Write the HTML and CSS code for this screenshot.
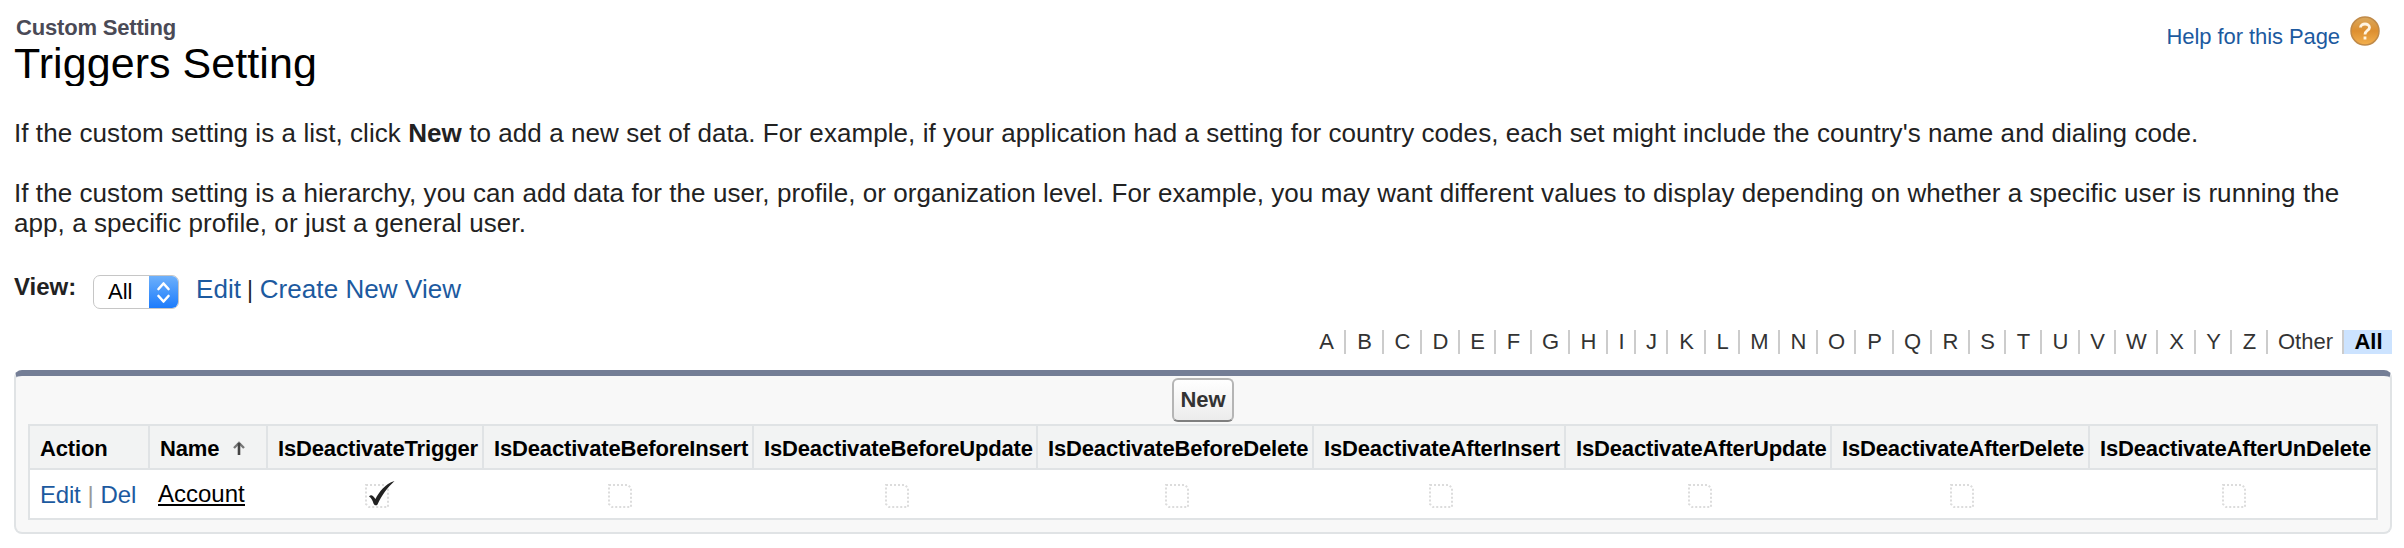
FILE: index.html
```html
<!DOCTYPE html>
<html lang="en">
<head>
<meta charset="utf-8">
<title>Triggers Setting</title>
<link rel="stylesheet" href="styles.css">
</head>
<body>
<header class="page-header">
  <div class="heading">
    <div class="kicker">Custom Setting</div>
    <h1 class="title">Triggers Setting</h1>
  </div>
  <a class="help">
    <span class="help-text">Help for this Page</span>
    <svg class="help-icon" viewBox="0 0 30 30">
      <defs><linearGradient id="orb" x1="0" y1="0" x2="0" y2="1"><stop offset="0" stop-color="#d9a75c"/><stop offset=".5" stop-color="#dd8f30"/><stop offset="1" stop-color="#f3b04e"/></linearGradient></defs>
      <circle cx="15" cy="15" r="14" fill="url(#orb)" stroke="#c08a48" stroke-width="1.500"/>
      <path d="M10.500 11.500C10.500 6.800 19.500 6.800 19.500 11.500C19.500 14.500 15 14.500 15 18.500M15 20.500V23.500" fill="none" stroke="#fff4e2" stroke-width="2.800"/>
    </svg>
  </a>
</header>
<main>
  <p class="intro">If the custom setting is a list, click <b>New</b> to add a new set of data. For example, if your application had a setting for country codes, each set might include the country's name and dialing code.</p>
  <p class="intro">If the custom setting is a hierarchy, you can add data for the user, profile, or organization level. For example, you may want different values to display depending on whether a specific user is running the<br>app, a specific profile, or just a general user.</p>
  <div class="view-bar">
    <span class="view-label">View:</span>
    <span class="select"><span class="select-value">All</span>
      <svg class="select-arrows" viewBox="0 0 29 34"><path d="M9.500 14L14.500 8.500L19.500 14M9.500 21L14.500 26.500L19.500 21" fill="none" stroke="#fff" stroke-width="2.600" stroke-linecap="round" stroke-linejoin="round"/></svg>
    </span>
    <span class="view-links"><a>Edit</a> <i>|</i> <a>Create New View</a></span>
  </div>
  <nav class="rolodex">
    <a>A</a><a>B</a><a>C</a><a>D</a><a class="w36">E</a><a class="w36">F</a><a>G</a><a>H</a><a class="w28">I</a><a class="w32">J</a><a>K</a><a class="w34">L</a><a class="w40">M</a><a>N</a><a>O</a><a>P</a><a>Q</a><a>R</a><a class="w36">S</a><a class="w36">T</a><a>U</a><a class="w36">V</a><a class="w42">W</a><a>X</a><a class="w36">Y</a><a class="w36">Z</a><a class="other">Other</a><a class="current">All</a>
  </nav>
  <section class="panel">
    <div class="buttons"><button class="new">New</button></div>
    <div class="grid">
      <div class="th">Action</div>
      <div class="th">Name<svg class="sort" viewBox="0 0 14 16"><path d="M2 8L7 3L12 8" fill="none" stroke="#777" stroke-width="2.400"/><path d="M7 15V3" stroke="#444" stroke-width="2.600"/></svg></div>
      <div class="th">IsDeactivateTrigger</div>
      <div class="th">IsDeactivateBeforeInsert</div>
      <div class="th">IsDeactivateBeforeUpdate</div>
      <div class="th">IsDeactivateBeforeDelete</div>
      <div class="th">IsDeactivateAfterInsert</div>
      <div class="th">IsDeactivateAfterUpdate</div>
      <div class="th">IsDeactivateAfterDelete</div>
      <div class="th">IsDeactivateAfterUnDelete</div>
      <div class="td actions"><a>Edit</a><i>|</i><a>Del</a></div>
      <div class="td name"><a class="account">Account</a></div>
      <div class="td check"><svg class="box" viewBox="0 0 24 24"><use href="#empty"/><path d="M4 12.500C6 10 8 11.500 10.500 15C14 8 20 0 29.500 -3C22 4 17 11 12.500 20.500C11.500 22 9.500 21.500 8.500 19.500C7.500 16.500 6.500 14 4 12.500Z" fill="#222"/></svg></div>
      <div class="td check"><svg class="box" viewBox="0 0 24 24"><path id="empty" d="M1 1H20L23 4V23H4L1 20Z" fill="none" stroke="#dcdcdc" stroke-width="2" stroke-dasharray="2 2"/></svg></div>
      <div class="td check"><svg class="box" viewBox="0 0 24 24"><use href="#empty"/></svg></div>
      <div class="td check"><svg class="box" viewBox="0 0 24 24"><use href="#empty"/></svg></div>
      <div class="td check"><svg class="box" viewBox="0 0 24 24"><use href="#empty"/></svg></div>
      <div class="td check"><svg class="box" viewBox="0 0 24 24"><use href="#empty"/></svg></div>
      <div class="td check"><svg class="box" viewBox="0 0 24 24"><use href="#empty"/></svg></div>
      <div class="td check"><svg class="box" viewBox="0 0 24 24"><use href="#empty"/></svg></div>
    </div>
  </section>
</main>
</body>
</html>
```
FILE: styles.css
```css
* { box-sizing: border-box; }
body { margin: 0; padding: 0 12px 0 14px; background: #fff; color: #222; font-family: "Liberation Sans", Arial, sans-serif; }
a { color: #1c5a9f; text-decoration: none; }
i { font-style: normal; }
.page-header { display: flex; justify-content: space-between; height: 118px; padding-top: 16px; }
.kicker { padding-left: 2px; font-size: 22px; line-height: 24px; font-weight: bold; letter-spacing: -.18px; color: #4a4a56; }
.title { margin: 0; height: 46px; overflow: hidden; font-size: 43px; line-height: 46px; font-weight: normal; letter-spacing: .06px; color: #000; }
.help { display: flex; height: 30px; padding-right: 12px; gap: 10px; }
.help-text { font-size: 22px; line-height: 41px; letter-spacing: -.08px; }
.help-icon { width: 30px; height: 30px; }
.intro { margin: 0 0 30px; font-size: 26px; line-height: 30px; letter-spacing: .067px; white-space: nowrap; }
.view-bar { display: flex; height: 34px; margin-top: 37px; }
.view-label { width: 79px; font-size: 24px; line-height: 24px; font-weight: bold; }
.select { display: flex; justify-content: space-between; width: 86px; height: 34px; border: 1px solid #c6c6c6; border-radius: 7px; overflow: hidden; color: #000; }
.select-value { padding-left: 14px; font-size: 22px; line-height: 32px; }
.select-arrows { width: 29px; height: 34px; margin-top: -1px; background: linear-gradient(#70b2fb, #1a7afc); }
.view-links { margin-left: 17px; font-size: 26px; line-height: 28px; letter-spacing: .067px; }
.view-links i { margin: 0 -.5px 0 -1.5px; font-size: 23px; }
.rolodex { display: flex; justify-content: flex-end; height: 24px; margin-top: 21px; font-size: 22px; line-height: 24px; text-align: center; }
.rolodex a { width: 38px; padding-left: 1px; border-right: 2px solid #ccc; color: #333; }
.rolodex .w28 { width: 28px; }
.rolodex .w32 { width: 32px; }
.rolodex .w34 { width: 34px; }
.rolodex .w36 { width: 36px; }
.rolodex .w40 { width: 40px; }
.rolodex .w42 { width: 42px; }
.rolodex .other { width: 76px; }
.rolodex .current { width: 48px; border: 0; background: #cce3ff; color: #000; font-weight: bold; }
.panel { height: 164px; margin-top: 16px; padding: 0 12px; border: 2px solid #e0e3e5; border-top: 6px solid #747e96; border-radius: 8px; background: #f8f8f8; }
.buttons { display: flex; justify-content: center; height: 48px; padding-top: 2px; }
.new { width: 62px; height: 44px; padding: 0; border: 2px solid #b5b5b5; border-bottom-color: #7f7f7f; border-radius: 6px; background: linear-gradient(#fff, #ececec); font: bold 22px/36px "Liberation Sans", Arial, sans-serif; color: #333; }
.grid { display: grid; grid-template-columns: 120px 118px 216px 270px 284px 276px 252px 266px 258px 286px; grid-template-rows: 44px 48px; height: 96px; border: 2px solid #e0e3e5; background: #fff; }
.th { padding-left: 10px; border-right: 2px solid #e0e3e5; border-bottom: 2px solid #e0e3e5; background: #f2f3f3; font-size: 22px; line-height: 45px; font-weight: bold; letter-spacing: -.16px; color: #000; white-space: nowrap; }
.th:nth-child(10) { border-right: 0; }
.sort { width: 14px; height: 16px; margin-left: 13px; }
.td { display: flex; }
.actions { padding-left: 10px; font-size: 24px; line-height: 50px; letter-spacing: -.2px; }
.actions i { margin: 0 7px; color: #999; }
.name { padding: 8px 0 0 8px; font-size: 24px; line-height: 31px; }
.account { height: 28px; border-bottom: 2px solid #000; color: #000; }
.check { justify-content: center; align-items: center; padding: 4px 0 0 1px; }
.box { width: 24px; height: 24px; overflow: visible; }
```
